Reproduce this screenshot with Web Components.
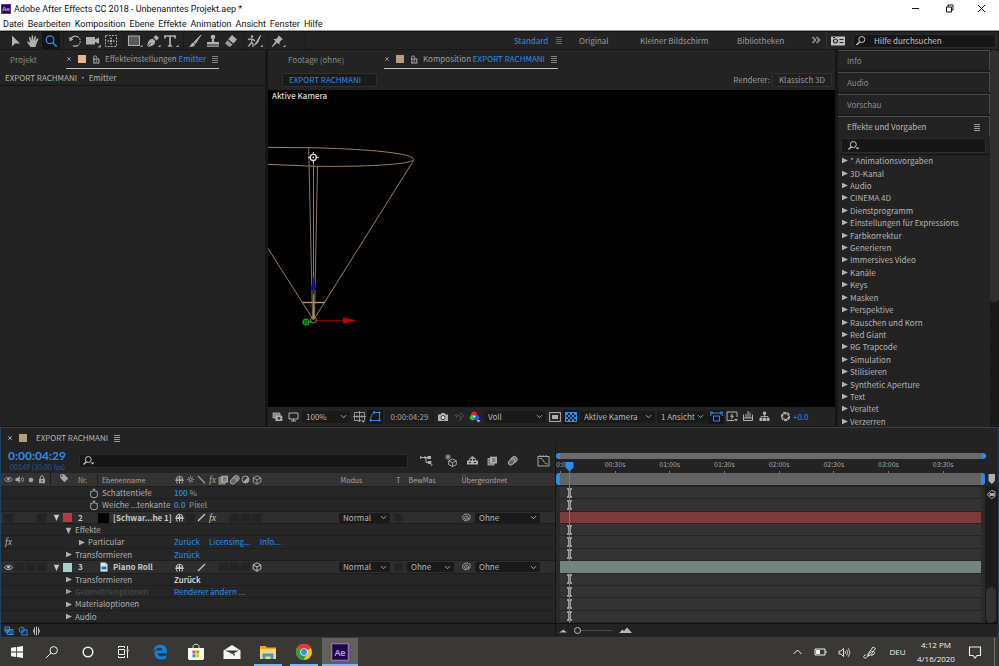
<!DOCTYPE html>
<html lang="de">
<head>
<meta charset="utf-8">
<title>Adobe After Effects CC 2018</title>
<style>
html, body { margin: 0; background: #161616; }
body {
  --ui: "Noto Sans CJK SC", "Noto Sans", sans-serif;
  --win: "Open Sans", "Noto Sans", sans-serif;
  --panel: #232323; --gap: #161616; --text: #b4b4b4; --dim: #8a8a8a; --blue: #2d8ceb;
  font: 8px/12px var(--ui); color: var(--text);
}
</style>
</head>
<body>
<ae-app></ae-app>
<script>
const BASE = `*{box-sizing:border-box}
button,select,input{font:inherit;color:inherit;background:none;border:0;padding:0;margin:0;border-radius:0;outline:0;appearance:none}
button{display:inline-flex;align-items:center;justify-content:center}
a{color:inherit;text-decoration:none}
ul{list-style:none;margin:0;padding:0}`;

function define(name, css, html, setup) {
  const t = document.createElement('template');
  customElements.define(name, class extends HTMLElement {
    connectedCallback() {
      if (this.shadowRoot) return;
      t.innerHTML = `<style>${BASE}${css}</style>${typeof html === 'function' ? html(this) : html}`;
      this.attachShadow({ mode: 'open' }).appendChild(t.content.cloneNode(true));
      if (setup) setup(this);
    }
  });
}

const S = 'fill="none" stroke="currentColor"';
/* name: [width, height, markup] */
const ICONS = {
  aelogo: [10, 10, `<rect width="10" height="10" fill="#2a0a4a"/><rect x=".5" y=".5" width="9" height="9" fill="none" stroke="#5b3a86"/><text x="5" y="7.3" font-size="6" font-weight="700" fill="#c79bff" text-anchor="middle" font-family="Open Sans">Ae</text>`],
  min: [9, 9, `<path d="M1 4.500h7" ${S}/>`],
  max: [9, 9, `<path d="M1.500 3h5v5h-5zM3 3V1h5v5H6.500" ${S}/>`],
  close: [9, 9, `<path d="M1 1l7 7M8 1L1 8" ${S}/>`],
  arrow: [14, 14, `<path d="M4 1.500v11l3-3h5z" fill="currentColor"/>`],
  hand: [14, 14, `<path d="M4.500 13L1.300 8.600c-.5-1 .6-1.500 1.300-.8l1.400 1L3 3.600c-.2-1 1-1.200 1.300-.3L5.500 6.500 5.700 2c0-1.100 1.300-1.100 1.400 0l.3 4.400L8.700 2.500c.3-1 1.500-.7 1.300.3L9.300 7l1.800-2.500c.6-.8 1.600-.2 1.200.7L10 11l-.5 2z" fill="currentColor"/>`],
  zoom: [14, 14, `<circle cx="6" cy="5.800" r="3.900" ${S} stroke-width="1.200"/><path d="M8.800 8.800l4 4" ${S} stroke-width="1.600"/>`],
  rotate: [14, 14, `<path d="M2.500 5.500A5 5 0 1 1 5 11.600" ${S} stroke-width="1.200" stroke-dasharray="10 1 1.500 1 1.500 1 1 1"/><path d="M1 3l.8 4.500L5.500 5.200z" fill="currentColor"/>`],
  camera: [16, 14, `<path d="M1 3h9v2.500L14 3.500v6.200L10 8v2.500H1z" fill="currentColor"/><path d="M15.800 10.500v3h-3z" fill="currentColor"/>`],
  pan: [14, 14, `<rect x="1.500" y="1.500" width="11" height="11" ${S} stroke-dasharray="2 1.200"/><path d="M7 3l1.200 1.800H5.800zM7 11l1.200-1.800H5.800zM3 7l1.800-1.200v2.400zM11 7L9.200 5.800v2.400z" fill="currentColor"/><circle cx="7" cy="7" r="1.200" fill="currentColor"/>`],
  rect: [16, 14, `<rect x="1.500" y="2" width="11" height="9.500" fill="#5a5a5a" stroke="currentColor"/><path d="M15.500 10.500v2.500H13z" fill="currentColor"/>`],
  pen: [16, 14, `<path d="M2 13c.5-3.500 1-5.500 3-7.500l3-.8 2.300 2.300-.8 3c-2 2-4 2.500-7.500 3z" fill="currentColor"/><path d="M2 13l4-4.300" stroke="#232323" stroke-width=".8"/><path d="M8.500 3.500L11 1l3 3-2.500 2.500z" fill="currentColor"/><path d="M15.500 10.500v2.500H13z" fill="currentColor"/>`],
  type: [16, 14, `<path d="M2 4.500V2h10v2.500M7 2v10M4.800 12h4.400" ${S} stroke-width="1.700"/><path d="M15.500 10.500v2.500H13z" fill="currentColor"/>`],
  brush: [14, 14, `<path d="M13 1L6 8.200l1.400 1.300z" stroke="currentColor" fill="currentColor"/><path d="M5.300 8.500l1.700 1.700c0 2-3 3-6 2.600 2-.8 2-3.800 4.300-4.300z" fill="currentColor"/>`],
  stamp: [14, 14, `<circle cx="7" cy="3" r="2.300" fill="currentColor"/><path d="M6.200 4.500h1.600l.6 3.500H13v2.500H1V8h4.600zM1 11.500h12v1.200H1z" fill="currentColor"/>`],
  eraser: [14, 14, `<path d="M8 1l5 4.500-3.500 4L4.200 5.300z" fill="currentColor"/><path d="M3.500 6.200l5 4.200-1.800 2.100H4.500L1 9.300z" fill="currentColor" opacity=".85"/>`],
  roto: [16, 14, `<circle cx="5" cy="2.500" r="1.200" fill="currentColor"/><path d="M1 5.500l3-.7 2 .6L8 7M5 5l-.5 3.500L6 10v3M4.500 8.500L1.500 12.500" ${S} stroke-width="1.300"/><path d="M13.500 1.500L9.500 8l-2 3 3-2z" fill="currentColor" stroke="currentColor"/><path d="M15.800 10.500v2.500h-2.500z" fill="currentColor"/>`],
  pin: [16, 14, `<path d="M8.500 1l4.500 4.500-1.300.2-2.200 2.500.2 2.300L7 8.700 2.500 13l-.7-.6L5.500 7.300 3.300 5l2.700.1 2.300-2.300z" fill="currentColor"/><path d="M15.500 10.500v2.500H13z" fill="currentColor"/>`],
  menu: [8, 8, `<path d="M1 1.500h6M1 3.500h6M1 5.500h6M1 7.500h6" ${S} stroke-width=".8"/>`],
  more: [10, 8, `<path d="M1.500 1l3 3-3 3M5.500 1l3 3-3 3" ${S} stroke-width="1.500"/>`],
  card: [14, 10, `<rect width="14" height="9" y=".5" fill="currentColor"/><circle cx="4.500" cy="5" r="2" fill="none" stroke="#222" stroke-width="1.200"/><path d="M8.500 3.500h4M8.500 6.500h4M2 1.500h2" stroke="#222"/>`],
  search: [12, 12, `<circle cx="6.800" cy="4.500" r="3" ${S}/><path d="M4.700 6.700L1.500 10" ${S} stroke-width="1.300"/>`],
  searchd: [14, 12, `<circle cx="6.300" cy="4.500" r="3" ${S}/><path d="M4.300 6.700L1.500 9.500" ${S} stroke-width="1.300"/><path d="M8.500 7.500h4l-2 2z" fill="currentColor"/>`],
  x: [6, 6, `<path d="M1.200 1.200l3.600 3.600M4.800 1.200L1.200 4.800" ${S} stroke-width=".9"/>`],
  lockopen: [8, 9, `<rect x="1.800" y="4" width="5" height="4" fill="none" stroke="currentColor" stroke-width="1.200"/><path d="M1.500 5V2.500a1.600 1.600 0 0 1 3.200 0v1.500M4.300 5v2" ${S}/>`],
  chev: [7, 7, `<path d="M1 2.200l2.500 2.500L6 2.200" ${S} stroke-width=".9"/>`],
  tri: [7, 7, `<path d="M1 .8l6 2.700L1 6.200z" fill="currentColor"/>`],
  trid: [7, 7, `<path d="M.8 .8h5.400L3.500 7z" fill="currentColor"/>`],
  eye: [9, 7, `<path d="M.5 3.500C2 .8 7 .8 8.500 3.500 7 6.200 2 6.200.5 3.500z" ${S} stroke-width=".9"/><circle cx="4.500" cy="3.300" r="1.300" fill="currentColor"/>`],
  speaker: [10, 9, `<path d="M.5 3h1.800L4.800 1v7L2.300 6H.5z" fill="currentColor"/><path d="M6 3c.6 1 .6 2 0 3M7.300 1.800c1.500 1.600 1.500 3.800 0 5.400" ${S} stroke-width=".9"/>`],
  dot: [6, 6, `<circle cx="3" cy="3" r="2.300" fill="currentColor"/>`],
  lock: [8, 9, `<rect x="1" y="3.800" width="6" height="4.400" fill="currentColor"/><path d="M2.300 4V2.500a1.700 1.700 0 0 1 3.400 0V4" ${S}/><path d="M4 5v2" stroke="#333"/>`],
  tag: [10, 10, `<path d="M1 1.500L5 1l4.300 4.500L5.500 9.300 1.300 5z" fill="currentColor"/><circle cx="2.800" cy="3" r=".8" fill="#333"/>`],
  shy: [9, 9, `<path d="M1 4.800a3.500 3.500 0 0 1 7 0zM4.500 1.500v7M.3 5.500h8.400" ${S}/><path d="M1.500 6v2h1.500M7.500 6v2H6M3 3v2.500M6 3v2.500" ${S} stroke-width=".7"/>`],
  sun: [9, 9, `<circle cx="4.500" cy="4.500" r="1.500" ${S} stroke-width=".9"/><path d="M4.500 .8v1.600M4.500 6.600v1.600M.8 4.500h1.600M6.600 4.500h1.600M2 2l1 1M6 6l1 1M7 2L6 3M3 6L2 7" ${S} stroke-width=".7"/>`],
  slashb: [9, 9, `<path d="M1 1l6.500 6.500" ${S} stroke-width="1.100"/><path d="M6 8h2.500" ${S} stroke-width=".7"/>`],
  slash: [9, 9, `<path d="M1 8l7-7" ${S} stroke-width="1.200"/>`],
  frames: [11, 10, `<rect x="1" y="2.500" width="6" height="6.500" fill="#777" stroke="currentColor" stroke-width=".8"/><rect x="3" y=".7" width="7" height="6.800" fill="currentColor"/><path d="M5 3h3.500M5 5h3.500" stroke="#444" stroke-width=".9"/>`],
  blur: [11, 10, `<ellipse cx="6.800" cy="3.800" rx="3.600" ry="3" transform="rotate(-40 6.800 3.800)" fill="#777" stroke="currentColor" stroke-width=".9"/><ellipse cx="4.500" cy="6" rx="3.600" ry="2.600" transform="rotate(-40 4.500 6)" fill="#666" stroke="currentColor" stroke-width=".9"/>`],
  adjust: [9, 9, `<circle cx="4.500" cy="4.500" r="3.400" ${S}/><path d="M7 2a3.500 3.500 0 0 1-5 5z" fill="currentColor"/>`],
  cube: [10, 10, `<path d="M5 .8l3.800 2v4.200L5 9.200 1.200 7V2.800zM1.200 2.800L5 4.900l3.800-2.100M5 4.900v4.300" ${S} stroke-width=".9"/>`],
  clock: [10, 11, `<circle cx="5" cy="6.300" r="3.600" ${S} stroke-width=".9"/><path d="M3.500 1.300h3M5 1.300v1.500M8 2.800l.9.9M2 2.800l-.9.9" ${S} stroke-width=".9"/>`],
  file: [8, 10, `<path d="M.5.500h5l2 2v7h-7z" fill="#dfe8ef"/><path d="M5.500.500l2 2h-2z" fill="#8ab"/><path d="M1.500 4.500h5v3h-5z" fill="#1877d2"/>`],
  spiral: [10, 10, `<path d="M5 5c.8-.9 1.600.6.7 1.200-1.200.8-2.700-.3-2.300-1.800.5-1.700 3.300-1.800 4 .1.700 2.200-1.500 3.900-3.400 3.200C1.300 6.800 1 3.600 2.800 2 4.500.5 7 .8 8 2M8.700 1.500c.8 2 .6 4.500-1.200 6" ${S} stroke-width=".9"/>`],
  stack: [11, 10, `<path d="M1 1h7v5H1zM1 1h1" fill="#888" stroke="currentColor" stroke-width=".8"/><rect x="3.500" y="3.500" width="6.800" height="5.500" fill="currentColor"/><circle cx="7" cy="6.300" r="1.400" fill="#333"/>`],
  monitor: [11, 10, `<path d="M1 1h9v6H1zM5.500 7v2M3 9h5" ${S}/>`],
  grid: [13, 12, `<path d="M1.500 1.500h10v8h-10zM6.500 0v11M0 5.500h13M4 4v3M9 4v3" ${S} stroke-width=".8"/><path d="M8 9.500h4.500l-2.200 2.300z" fill="currentColor" stroke="#232323" stroke-width=".4"/>`],
  mask: [12, 11, `<path d="M1.500 9.500C1.500 5 3 3 5 1.500h5.500v8z" ${S}/><path d="M.5 8.500h2v2h-2zM4 .5h2v2H4zM9.500.5h2v2h-2zM9.500 8.500h2v2h-2z" fill="currentColor"/>`],
  photo: [12, 10, `<path d="M1 2.500h2.500L4.500 1h3l1 1.500H11V9H1z" fill="currentColor"/><circle cx="6" cy="5.600" r="2" fill="#eee" stroke="#333"/>`],
  snap: [11, 11, `<path d="M2 7a2.500 2.500 0 1 1 3 2.500M5.500 3a2.300 2.300 0 1 1 2 4M1 5l2-2" ${S}/>`],
  rgb: [12, 12, `<circle cx="5" cy="3.600" r="3" fill="#f01818"/><circle cx="3.600" cy="6.500" r="2.800" fill="#20c838"/><circle cx="7.400" cy="6.500" r="2.800" fill="#2f52f0"/><circle cx="5.300" cy="5.500" r="1" fill="#fff"/><path d="M7.500 9.200h4l-2 2z" fill="#ddd"/>`],
  safe: [12, 10, `<rect x=".6" y=".6" width="10.800" height="8.800" ${S}/><rect x="3" y="3" width="6" height="4" fill="currentColor"/>`],
  checker: [12, 10, `<rect x=".6" y=".6" width="10.800" height="8.800" ${S} stroke-width="1.200"/><path d="M1 1h2v2H1zM5 1h2v2H5zM9 1h2v2H9zM3 3h2v2H3zM7 3h2v2H7zM1 5h2v2H1zM5 5h2v2H5zM9 5h2v2H9zM3 7h2v2H3zM7 7h2v2H7z" fill="currentColor"/>`],
  aspect: [13, 11, `<path d="M.8 0v5M12.200 0v5M1 2h11M3 .8L1.500 2 3 3.200M10 .8L11.500 2 10 3.200M3.500 5h6v5h-6z" ${S}/>`],
  fast: [12, 11, `<path d="M8 9.500H1V1h10v5" ${S}/><path d="M6.500 2L4 5.800h1.800L5 9l3-4.200H6.200z" fill="currentColor"/><path d="M8 8h4l-2 2.200z" fill="currentColor"/>`],
  timel: [12, 11, `<path d="M1.500 3.500v6h9v-6M4 3v4M6 0v7M8 1.500V7M2 7h8" ${S}/>`],
  flow: [11, 11, `<path d="M4 .8h3v3H4zM.5 7h3v3h-3zM4 7h3v3H4zM7.500 7h3v3h-3z" fill="currentColor"/><path d="M5.500 3.500V7M2 7.500V5.500h7v2" ${S} stroke-width=".9"/>`],
  aperture: [11, 11, `<circle cx="5.500" cy="5.500" r="3.500" ${S} stroke-width="2.300"/><path d="M5.500 0l2 3.800M10.500 4L7 6M9 10L6.500 7.500M3.500 10.500L3.800 7M.5 7.500L3.800 5M1 2l3.500 1.500" stroke="#232323" stroke-width=".8"/>`],
  minflow: [14, 11, `<path d="M1 2.500h5M6 2.500h3M7 2.500v5h3" ${S}/><path d="M1 1l3 1.500L1 4zM8.500 1H12v3H8.500zM9 6h3.300v3H9zM11 9.500h3l-1.500 1.500zM5 1.500h2v2H5z" fill="currentColor"/>`],
  draft: [13, 13, `<path d="M8.500 5l3.800 1.800v3.800l-3.800 2-3.800-2V6.800zM4.700 6.800l3.800 1.900 3.800-1.900M8.500 8.700v3.800" ${S} stroke-width=".9"/><path d="M4 0v6M1 3h6M1.800.8l4.400 4.400M6.200.8L1.800 5.200" ${S} stroke-width=".8"/>`],
  shyl: [13, 11, `<path d="M1 5.500h11V9.500H1z" fill="currentColor"/><path d="M6.500 1.500v7M3.500 5.500c0-2 1-3.500 3-3.500s3 1.500 3 3.500M5 4l1.500-2L8 4" ${S}/><path d="M3 7.500h2M8 7.500h2" stroke="#232323"/>`],
  graph: [13, 12, `<rect x="1" y="1.500" width="11" height="9.500" ${S} stroke-width=".9"/><path d="M2.500 3.500c2-.5 3 .5 4 2.500s2 3 4 3M3 0v2M6 0v2M9 0v2" ${S} stroke-width=".9"/>`],
  tog1: [10, 10, `<path d="M1 1h4.500v4H1zM3.500 3.500h5.500v5H3.500zM5 5h3M5 7h3" ${S}/><circle cx="3" cy="5" r="1.800" ${S}/>`],
  tog2: [10, 10, `<circle cx="3.800" cy="3.800" r="2.600" ${S}/><rect x="4" y="4" width="5" height="5" ${S}/>`],
  tog3: [9, 10, `<path d="M3 1C1.800 1 2.200 4 .8 5c1.400 1 1 4 2.200 4zM6 1c1.200 0 .8 3 2.200 4C6.800 6 7.200 9 6 9z" fill="currentColor"/><path d="M4.500 .5v9" ${S}/>`],
  mtn: [8, 5, `<path d="M0 4.500L2.500 3l2-1.500L6 3l2 1.500z" fill="currentColor"/>`],
  mtns: [13, 7, `<path d="M0 6l3.500-3.500L5 4l3-3.500L13 6z" fill="currentColor"/>`],
  marker: [10, 13, `<path d="M1.500 1h6.500v7L4.800 11 1.500 8z" fill="#b0b0b0"/>`],
  bin: [10, 11, `<path d="M1 5.500l4.500-4 3.500 1v5L5.500 9.500z" ${S}/><path d="M3.500 4h5v3h-5z" fill="currentColor"/>`],
  win: [14, 14, `<path d="M1 2.800l5.200-.8v4.600H1zM7 1.900l6-.9v5.600H7zM1 7.400h5.200V12L1 11.200zM7 7.400h6V13l-6-.9z" fill="#f4f4f4"/>`],
  tsearch: [14, 14, `<circle cx="8.700" cy="5.300" r="3.700" ${S}/><path d="M6 8l-5 5" ${S}/>`],
  cortana: [14, 14, `<circle cx="7" cy="7" r="4.800" ${S} stroke-width="1.500"/>`],
  task: [14, 14, `<path d="M1.500 3V1.500h6V3M1.500 4.500h6v5h-6zM1.500 11v1.500h6V11M10.500 1v3M10.500 6.500V13" ${S}/><path d="M9.500 4.500h2v2h-2z" fill="currentColor"/>`],
  edge: [16, 16, `<path d="M1 7.500C1.500 3.300 4.500.8 8.300.8c4.200 0 6.700 2.900 6.700 6.600v1.800H5.600c.2 2.300 2.200 3.300 4.400 3.300 1.600 0 3-.5 4.200-1.200v3c-1.500.8-3.200 1.200-5 1.200-4.300 0-6.700-2.500-6.700-5.900 0-2.300 1.200-4.200 3.300-5.300-.6.700-.9 1.500-1 2.300h5.700c0-1.700-.8-2.800-2.700-2.800C5 3.800 2.500 5.500 1 7.500z" fill="#0a84e0"/>`],
  store: [18, 18, `<path d="M6 5V3.500C6 .500 12 .500 12 3.500V5" fill="none" stroke="#ddd"/><path d="M1 5h16v10.500L16 17H2l-1-1.500z" fill="#f6f6f6"/><path d="M5.500 7.500h3v3h-3z" fill="#f25022"/><path d="M9.200 7.500h3v3h-3z" fill="#7fba00"/><path d="M5.500 11.200h3v3h-3z" fill="#00a4ef"/><path d="M9.200 11.200h3v3h-3z" fill="#ffb900"/>`],
  mail: [18, 16, `<path d="M.5 6.500L9 1l8.500 5.500v8.500H.5z" fill="#f4f4f4"/><path d="M2 6.500h14L9.500 10z" fill="#3b3835"/><path d="M9 9.500l3 3-.5-3z" fill="#3b3835"/>`],
  folder: [18, 15, `<path d="M1 1h5.500L8 2.500h9V14H1z" fill="#e8a820"/><path d="M1 4h16v10H1z" fill="#fbd775"/><path d="M3.500 14V8.500h11V14h-3v-2.500h-5V14z" fill="#3f9ad8"/>`],
  chrome: [18, 18, `<circle cx="9" cy="9" r="8" fill="#fbc116"/><path d="M9 9L2 5a8 8 0 0 1 14 0z" fill="#e33b2e"/><path d="M2.100 5A8 8 0 0 0 8.500 17L12 10.800 9 9z" fill="#2a9d48"/><circle cx="9" cy="9" r="3.800" fill="#f2f2f2"/><circle cx="9" cy="9" r="3" fill="#4484f0"/>`],
  aebig: [18, 18, `<rect x=".7" y=".7" width="16.600" height="16.600" fill="#1d0640" stroke="#9a70d0" stroke-width="1.200"/><text x="9" y="12.500" font-size="9" font-weight="600" fill="#c9a4f5" text-anchor="middle" font-family="Open Sans">Ae</text>`],
  up: [11, 8, `<path d="M1.500 6l4-4 4 4" ${S}/>`],
  batt: [13, 8, `<path d="M1 1h10v6H1zM12 3v2" ${S}/><path d="M2 2h4v4H2z" fill="currentColor"/>`],
  vol: [13, 11, `<path d="M1 4h2l2.500-2.500v8L3 7H1z" ${S} stroke-width=".9"/><path d="M7 4q1 1.500 0 3M8.700 2.700q2 2.800 0 5.600M10.400 1.300q3 4.200 0 8.400" ${S} stroke-width=".8"/>`],
  ink: [14, 13, `<path d="M5 8l5-7 2.500 1.500L7.500 9 5 10zM3 9c-3 0-3 3-.5 3S6 6 8.500 5.500s4 1 2.500 2.500-3 0-2 2" ${S} stroke-width=".9"/>`],
  note: [14, 13, `<path d="M1.500 1h11v8.500H9L7 12 5 9.500H1.500z" ${S} stroke-width="1.100"/>`],
  ibeam: [7, 10, `<path d="M1 1h5M1 9h5" ${S} stroke-width="1.500"/><path d="M3.500 1v8" ${S} stroke-width="3" opacity=".8"/>`],
};

define('ae-icon', `:host{display:inline-flex;flex:none}svg{display:block;overflow:visible}`, el => {
  const [w, h, m] = ICONS[el.getAttribute('name')];
  return `<svg width="${w}" height="${h}" viewBox="0 0 ${w} ${h}" aria-hidden="true">${m}</svg>`;
});
const ic = n => `<ae-icon name="${n}"></ae-icon>`;

define('ae-select', `
:host{display:block;flex:none;background:#1a1a1a;border-radius:2px;color:#b8b8b8}
label{display:grid;grid-template-columns:1fr 10px;grid-template-rows:100%;align-items:center;height:100%}
select{grid-area:1/1/2/3;width:100%;height:12px;line-height:12px;padding:0 9px 0 4px}
ae-icon{grid-area:1/2;pointer-events:none}`,
  el => `<label><select aria-label="${el.getAttribute('label')}"><option>${el.getAttribute('value')}</option></select>${ic('chev')}</label>`);

define('ae-search', `
:host{display:block;background:#161616;border:1px solid #2c2c2c;border-radius:2px;color:#c8c8c8}
label{display:flex;align-items:center;gap:7px;height:100%;padding:0 var(--inset,5px)}
input{flex:1;min-width:0;height:12px}input::placeholder{color:#c0c0c0;opacity:1}`,
  el => `<label>${ic(el.getAttribute('icon') || 'searchd')}<input type="search" aria-label="Suchen" placeholder="${el.getAttribute('placeholder') || ''}"></label>`);

define('title-bar', `
:host{display:flex;align-items:center;height:17px;background:#fff;color:#111;font:9px/12px Roboto,var(--win);padding:0 13px 0 1px}
.t{flex:1;padding-left:3px}.c{display:grid;grid-template-columns:31px 37px 18px;justify-items:center}
.c button:last-child{justify-self:end}`,
  `${ic('aelogo')}<span class="t">Adobe After Effects CC 2018 - Unbenanntes Projekt.aep *</span>
  <span class="c"><button aria-label="Minimieren">${ic('min')}</button><button aria-label="Verkleinern">${ic('max')}</button><button aria-label="Schließen">${ic('close')}</button></span>`);

define('menu-bar', `
:host{display:flex;gap:4px;height:14px;background:#fff;color:#111;font:9px/13px Roboto,var(--win);padding:1px 0 0 3px;border-bottom:1px solid #9a9a9a}`,
  ['Datei', 'Bearbeiten', 'Komposition', 'Ebene', 'Effekte', 'Animation', 'Ansicht', 'Fenster', 'Hilfe'].map(x => `<button>${x}</button>`).join(''));

define('tool-bar', `
:host{display:flex;align-items:stretch;height:18px;background:#232323;border-top:1px solid #111;margin-bottom:1px;color:#b0b0b0}
.g{display:flex;padding:0 3px;border-right:1px solid #1a1a1a;margin:0 -1px 0 0}
.g:first-of-type{padding-left:6px}
.g:nth-of-type(6){padding:0 18px 0 2px}
.g button{width:18px}.on{color:#2d8ceb;background:#141414;border-radius:2px}
nav{display:grid;grid-template-columns:41px 24px 61px 97px 74px 10px;align-items:center;margin-left:auto;margin-right:5px;color:#9c9c9c}
nav .b{color:#2d8ceb}.k{display:flex;align-items:center;border-left:1px solid #333;padding:0 8px 0 4px;color:#c0c0c0}
ae-search{width:143px;margin:2px 3px 1px 0;--inset:1px}`,
  [['arrow', 'hand', 'zoom'], ['rotate', 'camera', 'pan'], ['rect', 'pen', 'type'], ['brush', 'stamp', 'eraser'], ['roto'], ['pin']]
    .map(g => `<div class="g">${g.map(n => `<button aria-label="${n}"${n === 'zoom' ? ' class="on"' : ''}>${ic(n)}</button>`).join('')}</div>`).join('') +
  `<nav><a href="#" class="b">Standard</a><a href="#" class="b" aria-label="Menü">${ic('menu')}</a><a href="#">Original</a><a href="#">Kleiner Bildschirm</a><a href="#">Bibliotheken</a><a href="#" aria-label="Mehr">${ic('more')}</a></nav>
  <div class="k">${ic('card')}</div><ae-search icon="search" placeholder="Hilfe durchsuchen"></ae-search>`);

/* Active tab of a panel: close cross, colour swatch, optional lock and the slotted title */
define('panel-tab', `
:host{display:flex;align-items:center;gap:5px;height:19px;color:#9c9c9c}
:host([active]){border-bottom:1px solid #c4c4c4}
i{width:8px;height:8px;background:var(--swatch,#b59e7b);margin:0 1px}
:host(:not([lock])) i{margin-right:4px}
.t{white-space:pre}`,
  el => `${ic('x')}<i></i>${el.hasAttribute('lock') ? ic('lockopen') : ''}<span class="t"><slot></slot></span>${ic('menu')}`);

define('effect-controls', `
:host{display:flex;flex-direction:column;background:var(--panel)}
header{display:flex;height:20px;padding-left:10px;color:#8a8a8a;line-height:20px}
header>span{width:56px}b{font-weight:400;color:#2d8ceb}
p{margin:0;height:16px;line-height:15px;padding-left:5px;border-bottom:1px solid #121212;color:#b4b4b4}`,
  `<header><span>Projekt</span><panel-tab active lock style="--swatch:#e8b88c">Effekteinstellungen <b>Emitter</b></panel-tab></header><p>EXPORT RACHMANI • Emitter</p>`);

define('comp-view', `
:host{display:block;position:relative;background:#000;overflow:hidden;min-height:0}
svg{position:absolute;inset:0;width:100%;height:100%}
span{position:absolute;left:4px;top:0;color:#dcdcdc;font-weight:500;line-height:11px}`,
  `<svg fill="none" stroke="#9c7f62" aria-hidden="true">
  <path d="M-8 57.300L40 57.700C84 58.500 145.500 62 145.500 69.500 144 75 88 77 45 76.200L-8 74"/>
  <path d="M145.500 70.500L45.500 230L-6 149"/>
  <path d="M40.700 58L44.500 228M49.500 76L46.500 228M45.500 71V205" stroke="#8a7360"/>
  <path d="M34.500 212.500H56.500" stroke="#b4937a" stroke-width="1.400"/>
  <path d="M45.500 200V230" stroke="#8080d8"/><path d="M45.500 187l3 13h-6z" fill="#0a0a90" stroke="none"/><path d="M45.500 189v15" stroke="#1616c0"/>
  <path d="M49 230.500H76" stroke="#7a0808"/><path d="M75 227l13.500 3.500L75 234z" fill="#b00808" stroke="none"/>
  <circle cx="38" cy="232" r="2.800" stroke="#0fa00f" stroke-width="1.600"/><path d="M35 232h9M38 229v6" stroke="#10b010"/>
  <circle cx="45.500" cy="230" r="3"/>
  <circle cx="45.300" cy="67.400" r="3" stroke="#e8dcd0" stroke-width="1.300"/><circle cx="45.300" cy="67.400" r=".8" fill="#fff" stroke="none"/>
  <path d="M45.300 62v3M45.300 70v3M40 67.400h3M48 67.400h3" stroke="#e8dcd0"/></svg><span>Aktive Kamera</span>`);

define('comp-panel', `
:host{display:flex;flex-direction:column;background:var(--panel)}
header{display:flex;height:20px;padding-left:20px;color:#8a8a8a;line-height:20px}
header>span{width:96px}b{font-weight:400;color:#2d8ceb}
.r{display:flex;align-items:center;justify-content:space-between;height:20px;padding:0 3px 1px 14px;color:#9c9c9c;flex:none}
.r a{border:1px solid #303030;border-radius:2px;background:#1a1a1a;color:#2d8ceb;line-height:12px;padding:0 15px 0 6px}
.r span button{border:1px solid #303030;border-radius:2px;background:#202020;line-height:12px;padding:0 6px;margin-left:2px}
comp-view{flex:1}
footer{display:flex;align-items:center;height:19px;flex:none;padding-left:1px;color:#b0b0b0}
footer button{width:16px;height:14px;flex:none}
.on{color:#2d8ceb;background:#161616}
ae-select{margin:0 1px}footer .tc{width:49px;color:#a0a0a0;margin:0 1px 0 2px;background:#1e1e1e}.bl{color:#2d8ceb}.ap{margin-left:5px}`,
  () => {
    const b = (n, c = '') => `<button aria-label="${n}" class="${c}">${ic(n)}</button>`;
    const s = (w, v, l) => `<ae-select style="width:${w}px" value="${v}" label="${l}"></ae-select>`;
    return `<header><span>Footage (ohne)</span><panel-tab active lock>Komposition <b>EXPORT RACHMANI</b></panel-tab></header>
    <div class="r"><a href="#">EXPORT RACHMANI</a><span>Renderer:<button>Klassisch 3D</button></span></div><comp-view></comp-view>
    <footer>${b('stack') + b('monitor') + s(48, '100%', 'Vergrößerung') + b('grid') + b('mask', 'on')}<button class="tc">0:00:04:29</button>${b('photo')}<button aria-label="snap" style="color:#555">${ic('snap')}</button>${b('rgb') + s(62, 'Voll', 'Auflösung') + b('safe') + b('checker', 'on') + s(75, 'Aktive Kamera', '3D-Ansicht') + s(50, '1 Ansicht', 'Ansichten') + b('aspect', 'on') + b('fast') + b('timel') + b('flow') + b('aperture', 'ap')}<span class="bl">+0.0</span></footer>`;
  });

define('side-panels', `
:host{display:grid;grid-template-columns:1fr 9px;background:#1c1c1c}
main{display:flex;flex-direction:column;min-height:0}
h3{margin:0 0 2px;font-weight:400;font-size:8px;height:20px;line-height:18px;padding:0 8px 0 9px;background:var(--panel);border-top:1px solid #4a4a4a;border-right:1px solid #4a4a4a;color:#8e8e8e;display:flex;justify-content:space-between;align-items:center}
h3.a{color:#b8b8b8;margin:0}
.s{background:var(--panel);padding:2px 4px 1px 3px;border-bottom:1px solid #121212}
.s ae-search{height:15px}
ul{flex:1;display:grid;grid-auto-rows:1fr;background:var(--panel);min-height:0;margin-bottom:-2px}
li{display:flex;min-height:0;border-bottom:1px solid #202020}
li button{gap:2px;padding-left:3px;line-height:11px;color:#b4b4b4}
.sb{background:#191919}.sb i{display:block;height:67%;background:#303030;border-radius:4px}`,
  `<main><h3>Info</h3><h3>Audio</h3><h3>Vorschau</h3><h3 class="a">Effekte und Vorgaben ${ic('menu')}</h3><div class="s"><ae-search></ae-search></div><ul>` +
  ['* Animationsvorgaben', '3D-Kanal', 'Audio', 'CINEMA 4D', 'Dienstprogramm', 'Einstellungen für Expressions', 'Farbkorrektur', 'Generieren', 'Immersives Video', 'Kanäle', 'Keys', 'Masken', 'Perspektive', 'Rauschen und Korn', 'Red Giant', 'RG Trapcode', 'Simulation', 'Stilisieren', 'Synthetic Aperture', 'Text', 'Veraltet', 'Verzerren']
    .map(x => `<li><button>${ic('tri')}${x}</button></li>`).join('') + `</ul></main><div class="sb"><i></i></div>`);

/* One line of the layer outline. kind="head|layer|prop"; slots: av, name, sw, mode, t, mat, parent */
define('tl-row', `
:host{display:grid;grid-template-columns:49px 124px 165px 54px 14px 53px 1fr;align-items:center;min-height:0;background:#262626;border-bottom:1px solid #1e1e1e;white-space:nowrap}
:host([kind=layer]){background:#2e2e2e;color:#c8c8c8}
:host([kind=head]){background:#333;color:#a4a4a4}
div{display:flex;align-items:center;min-width:0;height:100%}`,
  ['av', 'name', 'sw', 'mode', 't', 'mat', 'parent'].map(s => `<div><slot name="${s}"></slot></div>`).join(''));

const ROWS = [
  { p: 39, i: 'clock', n: 'Schattentiefe', v: '<b>100</b> %' },
  { p: 39, i: 'clock', n: 'Weiche ...tenkante', v: '<b>0.0</b>&nbsp; Pixel' },
  { layer: 1, c: '#b83a3a', no: 2, n: '[Schwar...he 1]', bar: '#7d3b3b' },
  { p: 15, i: 'trid', n: 'Effekte', v: '' },
  { p: 28, i: 'tri', n: 'Particular', v: '<a href="#">Zurück</a><a href="#">Licensing...</a><a href="#">Info...</a>', fx: 1 },
  { p: 15, i: 'tri', n: 'Transformieren', v: '<a href="#">Zurück</a>' },
  { layer: 1, c: '#a9cfc8', no: 3, n: 'Piano Roll', mat: 1, bar: '#72857f' },
  { p: 15, i: 'tri', n: 'Transformieren', v: '<a href="#" class="w">Zurück</a>' },
  { p: 15, i: 'tri', n: 'Geometrieoptionen', v: '<a href="#">Renderer ändern ...</a>', off: 1 },
  { p: 15, i: 'tri', n: 'Materialoptionen', v: '' },
  { p: 15, i: 'tri', n: 'Audio', v: '' },
];
const cells = (a, c) => a.map(n => `<span class="c ${n ? '' : c}">${n === 'fx' ? '<em>fx</em>' : n === '-' ? '' : n ? ic(n) : ''}</span>`).join('');
const av = a => `<span slot="av" class="f av">${cells(a, 'box')}</span>`;
function outlineRow(r) {
  if (!r.layer) return `<tl-row>${av(r.fx ? ['fx', '-', '-', '-'] : ['-', '-', '-', '-'])}
    <span slot="name" class="f pn${r.off ? ' off' : ''}" style="padding-left:${r.p}px">${ic(r.i)}${r.n}</span><span slot="sw" class="f v">${r.v}</span></tl-row>`;
  const first = r.no === 2;
  return `<tl-row kind="layer">${av(first ? ['', '-', '-', ''] : ['eye', '', '', ''])}
    <span slot="name" class="f ln">${ic('trid')}<i style="background:${r.c}"></i><b>${r.no}</b>${first ? '<u></u>' : `<s>${ic('file')}</s>`}<strong>${r.n}</strong></span>
    <span slot="sw" class="f">${cells(first ? ['shy', '', 'slash', 'fx', '-', '', '', ''] : ['shy', '-', 'slash', '-', '', '', '', 'cube'], 'box')}</span>
    <ae-select slot="mode" style="width:51px" value="Normal" label="Modus"></ae-select><span slot="t" class="box tb"></span>
    ${r.mat ? '<ae-select slot="mat" style="width:47px" value="Ohne" label="BewMas"></ae-select>' : ''}
    <span slot="parent" class="f pa">${ic('spiral')}<ae-select style="width:65px" value="Ohne" label="Übergeordnet"></ae-select></span></tl-row>`;
}

define('tl-outline', `
:host{display:grid;grid-template-rows:27px 14px minmax(0,1fr) 14px;background:var(--panel);min-height:0;min-width:0}
.f{display:flex;align-items:center}.av{padding-left:2px}
.c{width:11px;height:10px;display:flex;align-items:center;justify-content:center;flex:none}
.box{background:#242424;box-shadow:inset 0 0 0 1px #2a2a2a}
em{font:italic 10px/10px "Liberation Serif",serif}
.top{display:flex;align-items:center;padding:2px 5px 0 7px}
.time{width:71px;color:#2d8ceb;font-family:Lato,sans-serif}.time b{display:block;font-size:12px;line-height:14px}.time small{display:block;font-size:7px;color:#1f5c9c;padding-left:2px;line-height:9px}
.top ae-search{flex:1;height:14px;max-width:329px;--inset:2px}
.ti{display:grid;grid-template-columns:24px 24px 20px 20px 20px 28px;justify-items:center;margin-left:6px;color:#b0b0b0}
.ti button:last-child{justify-self:end}
.rows{display:grid;grid-template-rows:repeat(11,minmax(0,1fr));min-height:0}
.hn{width:120px}.hn span{border-left:1px solid #1d1d1d;padding-left:4px}.hn .tg{width:28px;padding-left:8px}.hn .nr{width:19px;padding:0;border:0}
.hd{font-size:7px}
.pn{gap:3px;color:#b0b0b0}.off{color:#4e4e4e}.off ae-icon{color:#9a9a9a}
.v b,.v a{color:#2d8ceb;font-weight:400}.v b{font-weight:500}.v a{margin-right:9px}.v{white-space:pre;color:#9a9a9a}.v a.w{color:#e4e4e4;font-weight:500}
.ln{padding-left:3px}.ln i{width:9px;height:9px;margin:0 6px 0 3px}.ln b{width:20px}.ln u{width:11px;height:10px;background:#000;margin-right:4px}.ln s{display:flex;width:15px;padding-left:2px}
.ln b,.ln strong{font-weight:700}
ae-select{height:10px;font-size:8px}.tb{width:9px;height:9px;margin-left:1px}
.pa{gap:4px;padding-left:1px;color:#a8a8a8}
footer{display:flex;align-items:center;gap:4px;padding-left:3px;border-top:1px solid #111;color:#2d8ceb}footer button:last-child{color:#bbb}`,
  `<div class="top"><div class="time"><b>0:00:04:29</b><small>00149 (30.00 fps)</small></div><ae-search></ae-search>
   <div class="ti">${['minflow', 'draft', 'shyl', 'frames', 'blur', 'graph'].map(n => `<button aria-label="${n}">${ic(n)}</button>`).join('')}</div></div>
  <tl-row kind="head" class="hd">${av(['eye', 'speaker', 'dot', 'lock'])}
   <span slot="name" class="f hn"><span class="tg">${ic('tag')}</span><span class="nr">Nr.</span><span>Ebenenname</span></span>
   <span slot="sw" class="f">${cells(['shy', 'sun', 'slashb', 'fx', 'frames', 'blur', 'adjust', 'cube'], '')}</span>
   <span slot="mode">&nbsp;Modus</span><span slot="t">&nbsp; T</span><span slot="mat">&nbsp;BewMas</span><span slot="parent">&nbsp;Übergeordnet</span></tl-row>
  <div class="rows">${ROWS.map(outlineRow).join('')}</div>
  <footer>${['tog1', 'tog2', 'tog3'].map(n => `<button aria-label="${n}">${ic(n)}</button>`).join('')}</footer>`);

define('tl-tracks', `
:host{display:grid;grid-template-columns:minmax(0,1fr) 13px;grid-template-rows:27px 14px minmax(0,1fr) 14px;position:relative;background:var(--panel);min-height:0;min-width:0}
.nav{grid-column:1/3;padding:7px 12px 0 0;overflow:hidden}
.bar{height:6px;background:#6a6a6a;border:solid #2d8ceb;border-width:0 4px;border-radius:3px}
.rul{display:flex;margin-left:-23px;color:#a8a8a8;font-size:7px;line-height:8px;padding-top:1px;width:106%}
.rul span{flex:0 0 12%;text-align:center;height:14px;background:linear-gradient(#777,#777) 50% 100%/1px 3px no-repeat}
.rul span:first-child{text-align:left;padding-left:23px}
.work{background:#636363;border:solid #2d8ceb;border-width:0 4px;border-radius:3px;margin:0 0 2px}
.mk{color:#aaa;padding-left:2px}
.lanes{display:grid;grid-template-rows:repeat(11,minmax(0,1fr));background:#2a2a2a;padding:0 4px;min-height:0}
.lanes div{background:#333;border-bottom:1px solid #252525;display:flex;align-items:center;padding-left:6px;color:#b8b8b8;min-height:0}
.lanes .l{background:var(--c)}
.sb{background:#1b1b1b;display:flex;flex-direction:column;color:#aaa;padding:2px 2px 0 1px}.sb i{display:block;margin-top:auto;height:36px;background:#333;border-radius:5px}
.ft{grid-column:1/3;border-top:1px solid #111;display:flex;align-items:center;padding-left:3px;color:#b8b8b8;gap:7px}
input{width:38px;height:9px;background:linear-gradient(#4a4a4a,#4a4a4a) 0 50%/100% 1px no-repeat}
input::-webkit-slider-thumb{appearance:none;width:7px;height:7px;border:1px solid #bbb;border-radius:50%;background:#232323}
.ph{position:absolute;left:9px;top:16px;bottom:14px;width:9px;pointer-events:none}.ph svg{width:100%;height:100%;display:block}`,
  `<div class="nav"><div class="bar"></div><div class="rul">${['0:00', '00:30s', '01:00s', '01:30s', '02:00s', '02:30s', '03:00s', '03:30s'].map(t => `<span>${t}</span>`).join('')}</div></div>
  <div class="work"></div><div class="mk">${ic('marker')}</div>
  <div class="lanes">${ROWS.map(r => r.layer ? `<div class="l" style="--c:${r.bar}"></div>` : `<div>${ic('ibeam')}</div>`).join('')}</div>
  <div class="sb">${ic('bin')}<i></i></div>
  <div class="ft">${ic('mtn')}<input type="range" min="0" max="100" value="0" aria-label="Zoom">${ic('mtns')}</div>
  <div class="ph"><svg aria-hidden="true"><path d="M.5 0h8v5.500L4.500 9.500.5 5.500z" fill="#2d8ceb"/><path d="M4.500 8v400" stroke="#2d8ceb"/></svg></div>`);

define('time-line', `
:host{display:grid;grid-template-rows:18px minmax(0,1fr);border:1px solid #1c4468;background:var(--panel);min-height:0}
panel-tab{padding-left:6px;color:#b4b4b4}
.b{display:grid;grid-template-columns:554fr 443fr;min-height:0}tl-tracks{border-left:1px solid #141414}`,
  `<panel-tab>EXPORT RACHMANI</panel-tab><div class="b"><tl-outline></tl-outline><tl-tracks></tl-tracks></div>`);

define('task-bar', `
:host{display:flex;height:28px;background:#3a3835;color:#f0f0f0;font:8px/14px var(--win)}
button{width:36px;height:28px}button:first-of-type{width:34px}
.run{box-shadow:inset 0 -2px #76b9ed;width:28px;margin:0 4px}.act{background:#62605e;box-shadow:inset 0 -2px #76b9ed}
.tr{margin-left:auto;display:grid;grid-template-columns:24px 23px 24px 28px 27px 50px 28px 10px;align-items:center;justify-items:center;text-align:center}
.tr i{justify-self:end;width:1px;height:28px;background:#777;margin-right:4px}`,
  ['win', 'tsearch', 'cortana', 'task', 'edge', 'store', 'mail', 'folder', 'chrome', 'aebig']
    .map((n, i) => `<button aria-label="${n}" class="${i === 9 ? 'act' : i > 6 ? 'run' : ''}">${ic(n)}</button>`).join('') +
  `<div class="tr">${ic('up')}${ic('batt')}${ic('vol')}${ic('ink')}<span>DEU</span><time>4:12 PM<br>4/16/2020</time>${ic('note')}<i></i></div>`);

define('ae-app', `
:host{display:grid;grid-template-rows:auto auto auto minmax(0,377fr) minmax(0,211fr) auto;height:100vh;background:var(--gap)}
.m{display:grid;grid-template-columns:265fr 567fr 161fr;gap:3px;min-height:0;padding-bottom:1px}
.m>*{min-width:0;min-height:0}time-line{position:relative}`,
  `<title-bar></title-bar><menu-bar></menu-bar><tool-bar></tool-bar>
  <div class="m"><effect-controls></effect-controls><comp-panel></comp-panel><side-panels></side-panels></div>
  <time-line></time-line><task-bar></task-bar>`);
</script>
</body>
</html>
